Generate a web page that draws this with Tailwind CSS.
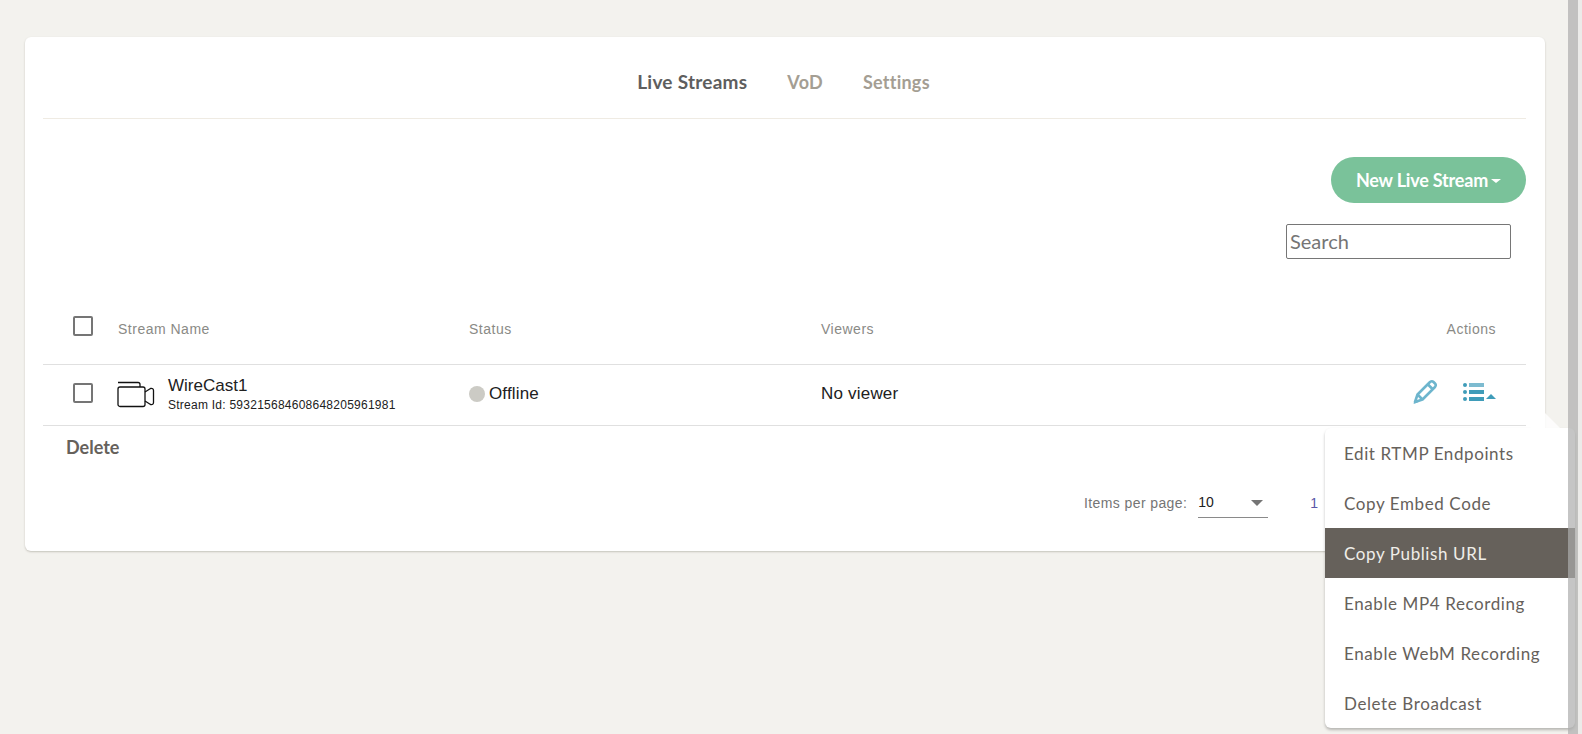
<!DOCTYPE html>
<html lang="en">
<head>
  <meta charset="UTF-8" />
  <meta name="viewport" content="width=device-width, initial-scale=1.0"/>
  <title>Live Streams</title>
  <script src="https://cdn.jsdelivr.net/npm/@tailwindcss/browser@4"></script>
</head>
<body class="relative h-[734px] w-[1582px] overflow-hidden bg-[#f3f2ee] font-['Liberation_Sans',sans-serif]">

  <main class="pl-[25px] pt-[37px]">
    <section class="h-[514px] w-[1520px] rounded-md bg-white pl-[18px] pr-[19px] shadow-[0_1px_2px_rgba(90,85,70,0.3)]">

      <!-- tabs -->
      <nav class="flex h-[82px] items-center justify-center gap-[40px] border-b border-[#efebe3] pr-[2px] pt-[10px] font-['Lato',sans-serif] text-[18px] font-bold tracking-[0.25px] text-[#a49e93]">
        <a class="text-[19px] text-[#5e5e5e]">Live Streams</a>
        <a>VoD</a>
        <a>Settings</a>
      </nav>

      <!-- toolbar -->
      <div class="flex flex-col items-end pt-[38px]">
        <button class="flex h-[46px] w-[195px] items-center justify-center gap-[3px] rounded-full bg-[#7ac29a] font-['Lato',sans-serif] text-[18px] font-bold tracking-[-0.2px] text-white">
          New Live Stream
          <span class="mt-[2px] h-0 w-0 border-x-[5px] border-t-[4px] border-x-transparent border-t-white"></span>
        </button>
        <input placeholder="Search" class="mr-[15px] mt-[21px] h-[35px] w-[225px] rounded-[2px] border border-[#767676] px-[3px] pb-[2px] font-['Lato',sans-serif] text-[20px] placeholder:text-[#757575]" />
      </div>

      <!-- table header -->
      <div class="mt-[35px] flex h-[71px] items-center border-b border-[#e0e0e0] pl-[30px] pr-[30px] text-[14px] tracking-[0.5px] text-[#8a8a86]">
        <span class="mt-[-6px] h-5 w-5 rounded-[2px] border-2 border-[#757575]"></span>
        <span class="ml-[25px] w-[351px]">Stream Name</span>
        <span class="w-[352px]">Status</span>
        <span class="flex-1">Viewers</span>
        <span>Actions</span>
      </div>

      <!-- stream row -->
      <div class="flex h-[61px] items-center border-b border-[#e0e0e0] pl-[30px] pr-[30px] text-[#212121]">
        <span class="mt-[-4px] h-5 w-5 rounded-[2px] border-2 border-[#757575]"></span>
        <div class="ml-[24px] flex w-[352px] items-center">
          <svg class="mt-[-2px]" width="38" height="27" viewBox="0 0 38 27" fill="none" stroke="#111" stroke-width="1.3" stroke-linejoin="round">
            <path d="M1 1.5h20q2 0 2 2v2.500" />
            <rect x="1" y="6" width="27" height="19.500" rx="2" />
            <path d="M28 11l5.500-3.500q3-.5 3 2v12q0 2.500-3 2l-5.500-3.500" />
          </svg>
          <div class="ml-[13px] mt-[-2px]">
            <div class="text-[17px] leading-[22px]">WireCast1</div>
            <div class="text-[12px] leading-[16px] tracking-[0.25px]">Stream Id: 593215684608648205961981</div>
          </div>
        </div>
        <div class="mt-[-2px] flex w-[352px] items-center gap-[4px] text-[17px] tracking-[0.15px]">
          <span class="h-4 w-4 rounded-full bg-[#cccbc5]"></span>
          Offline
        </div>
        <span class="mt-[-2px] flex-1 text-[17px] tracking-[0.2px]">No viewer</span>
        <div class="mt-[-6px] flex items-center gap-[25px]">
          <svg width="26" height="26" viewBox="0 0 26 26" fill="none" stroke="#6db5cd" stroke-width="2.600" stroke-linejoin="round">
            <path d="M3 23l2.500-7.500L18 3q2-1.500 3.500 0l1.500 1.500q1.500 1.500 0 3.500L10.500 20.500z" />
            <path d="M16 5.500l4.500 4.500M5.500 15.500l5 5" />
            <path d="M1.500 25l2-5 3 3z" fill="#6db5cd" stroke="none" />
          </svg>
          <svg width="33" height="20" viewBox="0 0 33 20" fill="#3f9cb9">
            <circle cx="2" cy="3" r="2" />
            <circle cx="2" cy="10" r="2" />
            <circle cx="2" cy="17" r="2" />
            <rect x="6" y="1" width="15" height="4" fill="#7dbbd0" />
            <rect x="6" y="8" width="15" height="4" />
            <rect x="6" y="15" width="15" height="4" />
            <path d="M23 17l5-5 5 5z" />
          </svg>
        </div>
      </div>

      <button class="ml-[23px] mt-[9px] font-['Lato',sans-serif] text-[18px] font-bold leading-[24px] text-[#66615b]">Delete</button>

      <!-- pagination -->
      <div class="mt-[27px] flex items-center pl-[1041px] text-[14px]">
        <span class="tracking-[0.4px] text-[#757575]">Items per page:</span>
        <div class="ml-[11px] flex h-[30px] w-[70px] items-center justify-between border-b border-[#8a8a8a] pr-[5px] text-[#212121]">
          10
          <span class="h-0 w-0 border-x-[6px] border-t-[6px] border-x-transparent border-t-[#757575]"></span>
        </div>
        <span class="ml-[42px] text-[#5a57a8]">1</span>
      </div>
    </section>
  </main>

  <!-- action menu, open over the page -->
  <div class="absolute left-[1325px] top-[428px] w-[250px] rounded-md bg-white font-['Lato',sans-serif] text-[17px] tracking-[0.6px] text-[#66615b] shadow-[0_2px_3px_rgba(0,0,0,0.25)]">
    <span class="absolute left-[205px] top-[-15px] h-0 w-0 border-x-[15px] border-b-[15px] border-x-transparent border-b-white/80"></span>
    <div class="flex h-[50px] items-center pl-[19px] pt-[2px]">Edit RTMP Endpoints</div>
    <div class="flex h-[50px] items-center pl-[19px] pt-[2px]">Copy Embed Code</div>
    <div class="flex h-[50px] items-center bg-[#66615b] pl-[19px] pt-[2px] text-[#f0eee9]">Copy Publish URL</div>
    <div class="flex h-[50px] items-center pl-[19px] pt-[2px]">Enable MP4 Recording</div>
    <div class="flex h-[50px] items-center pl-[19px] pt-[2px]">Enable WebM Recording</div>
    <div class="flex h-[50px] items-center rounded-b-md pl-[19px] pt-[2px]">Delete Broadcast</div>
  </div>

  <!-- window scrollbar, it sits over the menu -->
  <div class="absolute right-0 top-0 flex h-full w-[14px]">
    <div class="w-[10px] bg-[#acacac]/70"></div>
    <div class="flex-1 bg-[#ecebe9]"></div>
  </div>

</body>
</html>
